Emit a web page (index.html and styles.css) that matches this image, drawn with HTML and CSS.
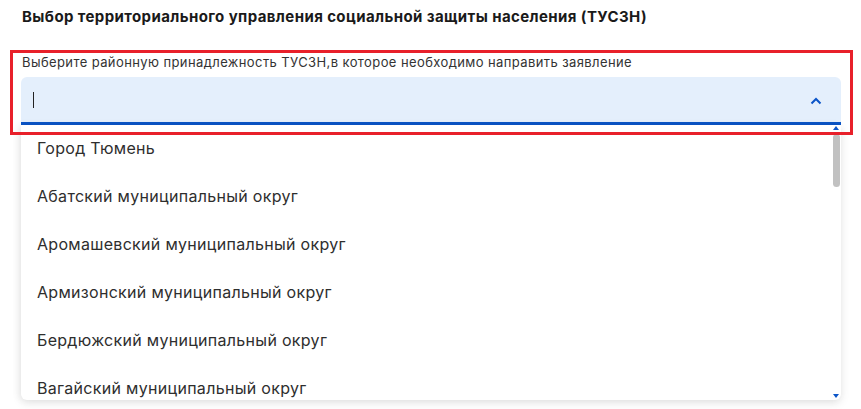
FILE: index.html
```html
<!DOCTYPE html>
<html lang="ru">
<head>
<meta charset="utf-8">
<link rel="stylesheet" href="styles.css">
</head>
<body>
<div class="page">
  <h2 class="title">Выбор территориального управления социальной защиты населения (ТУСЗН)</h2>
  <div class="field">
    <div class="label">Выберите районную принадлежность ТУСЗН,в которое необходимо направить заявление</div>
    <div class="control">
      <span class="caret"></span>
      <svg class="chevron" width="12" height="8" viewBox="0 0 12 8"><path d="M1.5 6.5 L6 2 L10.5 6.5" fill="none" stroke="#0b55c8" stroke-width="2"/></svg>
      <div class="dropdown">
        <ul class="options">
          <li>Город Тюмень</li>
          <li>Абатский муниципальный округ</li>
          <li>Аромашевский муниципальный округ</li>
          <li>Армизонский муниципальный округ</li>
          <li>Бердюжский муниципальный округ</li>
          <li>Вагайский муниципальный округ</li>
        </ul>
        <div class="scrollbar">
          <span class="arrow up"></span>
          <span class="thumb"></span>
          <span class="arrow down"></span>
        </div>
      </div>
    </div>
  </div>
</div>
</body>
</html>
```
FILE: styles.css
```css
html, body {
  margin: 0;
  padding: 0;
  background: #ffffff;
}
body {
  font-family: Inter, "Noto Sans", Roboto, sans-serif;
  color: #2b2b2b;
  width: 861px;
  height: 409px;
  overflow: hidden;
}
.page {
  padding: 8px 0 0 21px;
}
.title {
  margin: 0 0 28px 1px;
  font-size: 15px;
  line-height: 18px;
  font-weight: 700;
  color: #1a1a1a;
  letter-spacing: 0.4px;
}
.field {
  position: relative;
  width: 820px;
}
.field::after {
  content: "";
  position: absolute;
  top: -4px;
  left: -11px;
  right: -12px;
  bottom: -10px;
  border: 3px solid #e8202a;
  pointer-events: none;
  z-index: 5;
}
.label {
  font-size: 13px;
  line-height: 16px;
  color: #333333;
  margin-left: 1px;
  margin-bottom: 7px;
  letter-spacing: 0.4px;
}
.control {
  position: relative;
  height: 45px;
  background: #e4effc;
  border-radius: 6px 6px 0 0;
  border-bottom: 3px solid #0b55c8;
}
.caret {
  position: absolute;
  left: 12px;
  top: 15px;
  width: 1px;
  height: 16px;
  background: #222;
}
.chevron {
  position: absolute;
  right: 19px;
  top: 20px;
}
.dropdown {
  position: absolute;
  top: 100%;
  margin-top: 3px;
  left: 0;
  width: 820px;
  height: 275px;
  background: #fff;
  border-radius: 0 0 6px 6px;
  box-shadow: 0 3px 10px rgba(0, 0, 0, 0.1), -2px 0 8px rgba(0,0,0,0.05);
  overflow: hidden;
  z-index: 2;
}
.options {
  list-style: none;
  margin: 0;
  padding: 0;
}
.options li {
  height: 48px;
  line-height: 47px;
  padding-left: 16px;
  font-size: 16px;
  color: #2e2e2e;
  letter-spacing: 0.3px;
}
.scrollbar {
  position: absolute;
  right: 0;
  top: 0;
  bottom: 0;
  width: 9px;
}
.arrow {
  position: absolute;
  left: 1px;
  width: 0;
  height: 0;
  border-left: 3.5px solid transparent;
  border-right: 3.5px solid transparent;
}
.arrow.up {
  top: 1px;
  border-bottom: 4px solid #0b55c8;
}
.arrow.down {
  bottom: 2px;
  border-top: 4px solid #0b55c8;
}
.thumb {
  position: absolute;
  left: 1px;
  top: 9px;
  width: 7px;
  height: 53px;
  border-radius: 4px;
  background: #c1c1c1;
}
```
